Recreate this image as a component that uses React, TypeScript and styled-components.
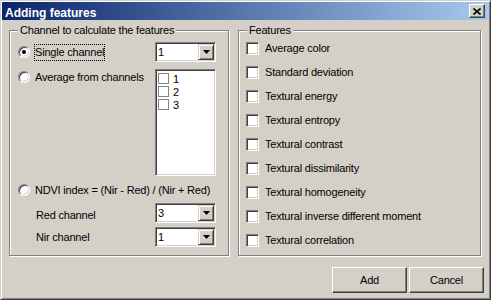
import React from 'react';
import styled, { createGlobalStyle } from 'styled-components';

const GlobalStyle = createGlobalStyle`
  html, body {
    margin: 0;
    padding: 0;
    background: #d4d0c8;
  }
  body {
    font-family: "Liberation Sans", Arial, sans-serif;
    font-size: 11px;
    letter-spacing: -0.2px;
    color: #000;
  }
`;

const Window = styled.div`
  box-sizing: border-box;
  width: 491px;
  height: 300px;
  padding: 1px;
  border: 1px solid;
  border-color: #d4d0c8 #404040 #404040 #d4d0c8;
  box-shadow: inset 1px 1px #fff, inset -1px -1px #808080;
  background: #d4d0c8;
  display: flex;
  flex-direction: column;
  overflow: hidden;
`;

const TitleBar = styled.div`
  height: 18px;
  flex: none;
  display: flex;
  align-items: center;
  justify-content: space-between;
  padding: 0 4px 0 3px;
  background: linear-gradient(90deg, #0a246a, #a6caf0);
`;

const Title = styled.span`
  margin-top: 3px;
  color: #fff;
  font-size: 12px;
  font-weight: bold;
  line-height: 14px;
  letter-spacing: 0;
`;

const raised = `
  border: 1px solid;
  border-color: #fff #404040 #404040 #fff;
  box-shadow: inset -1px -1px #808080;
  background: #d4d0c8;
`;

const sunken = `
  border: 1px solid;
  border-color: #808080 #fff #fff #808080;
  box-shadow: inset 1px 1px #404040, inset -1px -1px #d4d0c8;
`;

const CloseButton = styled.div`
  box-sizing: border-box;
  width: 16px;
  height: 14px;
  ${raised}
  display: flex;
  align-items: center;
  justify-content: center;
`;

const Body = styled.div`
  flex: 1;
  display: flex;
  flex-direction: column;
  padding: 4px 5px 0 7px;
`;

const GroupsRow = styled.div`
  display: flex;
  gap: 9px;
`;

const Group = styled.fieldset<{ $width: number }>`
  box-sizing: border-box;
  width: ${p => p.$width}px;
  height: 232px;
  min-width: 0;
  margin: 0;
  padding: 0 7px;
  border: 1px solid #808080;
  box-shadow: inset 1px 1px #fff, 1px 1px #fff;
`;

const Legend = styled.legend`
  margin-left: 1px;
  padding: 0 2px;
  line-height: 13px;
  background: #d4d0c8;
`;

const ChannelGrid = styled.div`
  display: grid;
  grid-template-columns: 137px 61px;
  grid-template-rows: 27px 113px 21px 24px 20px;
  align-items: start;
  padding: 5px 0 0 1px;
`;

const RadioRow = styled.label<{ $span?: boolean; $height: number }>`
  display: flex;
  align-items: center;
  gap: 4px;
  height: ${p => p.$height}px;
  grid-column: ${p => (p.$span ? '1 / 3' : 'auto')};
  white-space: nowrap;
`;

const Radio = styled.span<{ $checked?: boolean }>`
  box-sizing: border-box;
  width: 12px;
  height: 12px;
  flex: none;
  border-radius: 50%;
  ${sunken}
  background: #fff;
  display: flex;
  align-items: center;
  justify-content: center;
  &::after {
    content: '';
    width: 4px;
    height: 4px;
    border-radius: 50%;
    background: #000;
    display: ${p => (p.$checked ? 'block' : 'none')};
  }
`;

const Caption = styled.span<{ $focus?: boolean }>`
  padding: 1px 0;
  line-height: 13px;
  border: 1px ${p => (p.$focus ? 'dotted #000' : 'solid transparent')};
`;

const FieldLabel = styled.span`
  align-self: center;
  padding-left: 18px;
  line-height: 13px;
`;

const Combo = styled.div`
  box-sizing: border-box;
  width: 61px;
  height: 20px;
  padding: 1px;
  ${sunken}
  background: #fff;
  display: flex;
`;

const ComboValue = styled.span`
  flex: 1;
  padding-left: 1px;
  line-height: 16px;
`;

const DropButton = styled.span`
  box-sizing: border-box;
  width: 16px;
  height: 16px;
  ${raised}
  border-color: #d4d0c8 #404040 #404040 #d4d0c8;
  box-shadow: inset 1px 1px #fff, inset -1px -1px #808080;
  display: flex;
  align-items: center;
  justify-content: center;
`;

const ListBox = styled.div`
  box-sizing: border-box;
  width: 61px;
  height: 107px;
  padding: 2px 1px;
  ${sunken}
  background: #fff;
`;

const ListItem = styled.div`
  display: flex;
  align-items: center;
  gap: 4px;
  height: 13px;
  padding-left: 1px;
`;

const SmallBox = styled.span`
  box-sizing: border-box;
  width: 11px;
  height: 11px;
  border: 1px solid #858585;
  background: #fff;
`;

const FeatureList = styled.div`
  display: flex;
  flex-direction: column;
  margin-top: -1px;
`;

const FeatureRow = styled.label`
  display: flex;
  align-items: center;
  gap: 6px;
  height: 24px;
  line-height: 13px;
`;

const CheckBox = styled.span`
  box-sizing: border-box;
  width: 13px;
  height: 13px;
  flex: none;
  ${sunken}
  background: #fff;
`;

const ButtonRow = styled.div`
  display: flex;
  justify-content: flex-end;
  gap: 2px;
  margin-top: 11px;
`;

const Button = styled.button`
  box-sizing: border-box;
  width: 75px;
  height: 26px;
  padding: 0;
  ${raised}
  font: inherit;
  letter-spacing: inherit;
  color: #000;
`;

const Arrow = () => (
  <svg width="7" height="4" viewBox="0 0 7 4">
    <path d="M0 0h7L3.5 4z" fill="#000" />
  </svg>
);

const ComboBox = ({ value }: { value: string }) => (
  <Combo>
    <ComboValue>{value}</ComboValue>
    <DropButton>
      <Arrow />
    </DropButton>
  </Combo>
);

const features = [
  'Average color',
  'Standard deviation',
  'Textural energy',
  'Textural entropy',
  'Textural contrast',
  'Textural dissimilarity',
  'Textural homogeneity',
  'Textural inverse different moment',
  'Textural correlation',
];

export default function App() {
  return (
    <>
      <GlobalStyle />
      <Window>
        <TitleBar>
          <Title>Adding features</Title>
          <CloseButton>
            <svg width="8" height="7" viewBox="0 0 8 7">
              <path d="M0.5 0.5L7.5 6.5M7.5 0.5L0.5 6.5" stroke="#000" strokeWidth="1.6" />
            </svg>
          </CloseButton>
        </TitleBar>
        <Body>
          <GroupsRow>
            <Group $width={220}>
              <Legend>Channel to calculate the features</Legend>
              <ChannelGrid>
                <RadioRow $height={20}>
                  <Radio $checked />
                  <Caption $focus>Single channel</Caption>
                </RadioRow>
                <ComboBox value="1" />
                <RadioRow $height={16}>
                  <Radio />
                  <Caption>Average from channels</Caption>
                </RadioRow>
                <ListBox>
                  {['1', '2', '3'].map(n => (
                    <ListItem key={n}>
                      <SmallBox />
                      {n}
                    </ListItem>
                  ))}
                </ListBox>
                <RadioRow $span $height={16}>
                  <Radio />
                  <Caption>NDVI index = (Nir - Red) / (Nir + Red)</Caption>
                </RadioRow>
                <FieldLabel>Red channel</FieldLabel>
                <ComboBox value="3" />
                <FieldLabel>Nir channel</FieldLabel>
                <ComboBox value="1" />
              </ChannelGrid>
            </Group>
            <Group $width={243}>
              <Legend>Features</Legend>
              <FeatureList>
                {features.map(f => (
                  <FeatureRow key={f}>
                    <CheckBox />
                    {f}
                  </FeatureRow>
                ))}
              </FeatureList>
            </Group>
          </GroupsRow>
          <ButtonRow>
            <Button>Add</Button>
            <Button>Cancel</Button>
          </ButtonRow>
        </Body>
      </Window>
    </>
  );
}
